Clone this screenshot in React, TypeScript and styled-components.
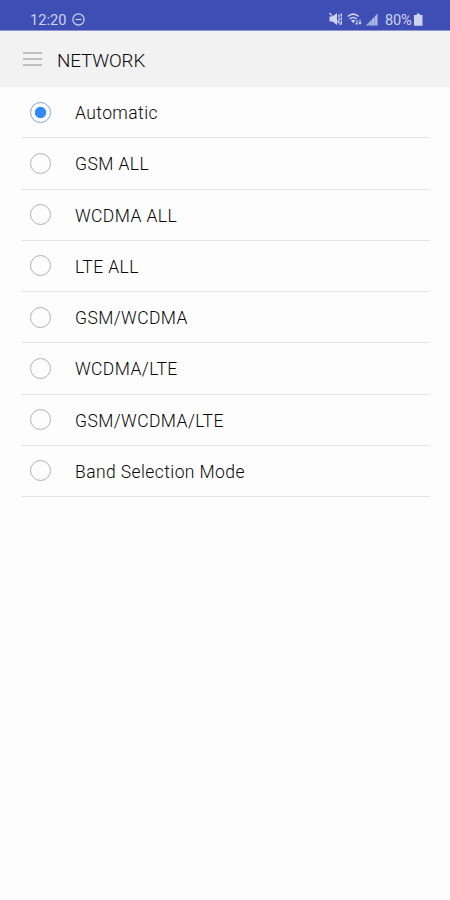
import React, { useState } from 'react';
import styled, { createGlobalStyle } from 'styled-components';

const GlobalStyle = createGlobalStyle`
  * { box-sizing: border-box; }
  body { margin: 0; background: #fdfdfd; font-family: Roboto, 'Liberation Sans', sans-serif; }
`;

const Screen = styled.div`
  display: flex;
  flex-direction: column;
  width: 450px;
  height: 900px;
  overflow: hidden;
  background: #fdfdfd;
`;

const StatusBar = styled.header`
  display: flex;
  align-items: center;
  flex: none;
  height: 31px;
  padding: 8px 27px 0 30px;
  background: #3e4eb5;
  border-bottom: 1px solid #8b95d2;
  color: #cdd3f3;
`;

const Clock = styled.span`
  width: 37px;
  margin-right: 5px;
  padding-top: 2px;
  font-size: 14.6px;
  line-height: 20px;
  white-space: nowrap;
`;

const StatusIcons = styled.div`
  display: flex;
  align-items: center;
  margin-left: auto;
`;

const StatusIcon = styled.svg<{ $gap?: number }>`
  display: block;
  flex: none;
  margin-right: ${({ $gap = 0 }) => $gap}px;
`;

const Battery = styled.span`
  width: 29px;
  padding-top: 1px;
  font-size: 14.6px;
  line-height: 20px;
  letter-spacing: -0.15px;
  white-space: nowrap;
`;

const TitleBar = styled.div`
  display: flex;
  align-items: center;
  flex: none;
  height: 56px;
  padding: 2px 23px 0;
  background: #f2f2f2;
`;

const MenuButton = styled.button`
  display: flex;
  flex-direction: column;
  gap: 4px;
  width: 19px;
  margin: 0 15px 3px 0;
  padding: 0;
  border: 0;
  background: none;
`;

const MenuLine = styled.span`
  height: 2px;
  background: #bfbfbf;
`;

const Title = styled.h1`
  margin: 0;
  padding-top: 1px;
  color: #080808;
  font-size: 18.8px;
  font-weight: 300;
  line-height: 24px;
  letter-spacing: -0.1px;
`;

const Options = styled.div`
  display: flex;
  flex-direction: column;
  padding: 0 20px 0 21px;
`;

const Option = styled.label`
  display: flex;
  align-items: center;
  height: 51.25px;
  padding-left: 9px;
  border-bottom: 1px solid #e4e4e4;
`;

const Radio = styled.input`
  appearance: none;
  flex: none;
  width: 21px;
  height: 21px;
  margin: 0 24px 0 0;
  border: 1px solid #b0b0b0;
  border-radius: 50%;
  &:checked {
    border-color: #7fa6cf;
    background: radial-gradient(circle, #2f8af5 5.3px, transparent 6px);
  }
`;

const Label = styled.span`
  padding-top: 2px;
  color: #080808;
  font-size: 17.5px;
  font-weight: 300;
  line-height: 22px;
  letter-spacing: 0.41px;
  white-space: nowrap;
`;

const modes = [
  'Automatic',
  'GSM ALL',
  'WCDMA ALL',
  'LTE ALL',
  'GSM/WCDMA',
  'WCDMA/LTE',
  'GSM/WCDMA/LTE',
  'Band Selection Mode',
];

export default function App() {
  const [mode, setMode] = useState(modes[0]);
  return (
    <Screen>
      <GlobalStyle />
      <StatusBar>
        <Clock>12:20</Clock>
        <StatusIcon width="13" height="13" viewBox="0 0 13 13" fill="none" stroke="currentColor" strokeWidth="1.2">
          <circle cx="6.5" cy="6.5" r="5.6" />
          <path d="M3.5 6.5h6" />
        </StatusIcon>
        <StatusIcons>
          <StatusIcon $gap={4} width="14" height="14" viewBox="0 0 14 14" fill="currentColor">
            <path d="M.5 4.5h3L8 1v12L3.5 9.5h-3z" />
            <path d="M.5 1l11 11.5M10 2.5v9M12.3 1.5v11.5" fill="none" stroke="currentColor" strokeWidth="1.4" strokeDasharray="3 0.7" />
          </StatusIcon>
          <StatusIcon $gap={4} width="15" height="14" viewBox="0 0 15 14" fill="none" stroke="currentColor" strokeWidth="1.5">
            <path d="M.7 4.5Q6.2-.3 11.8 4.5M2.6 7Q6.2 4 9.8 7" />
            <path d="M4 8.5q2.2-1.4 4.4 0l-2.2 2.7z" fill="currentColor" stroke="none" />
            <path d="M10 8v4.5m-1.3-1.3l1.3 1.3M13 12V7.5m-1.3 3.2L13 12l1.3-1.3" strokeWidth="1.1" />
          </StatusIcon>
          <StatusIcon $gap={7} width="12" height="13" viewBox="0 0 12 13" fill="currentColor">
            <path d="M0 12.5L11.5.5v12z" opacity=".5" />
            <path d="M0 12.5l2.3-2.4v2.4zM3 9.4l2.2-2.3v5.4H3zM6 6.3L8.2 4v8.5H6zM9 3.2L11.5.5v12H9z" opacity=".55" />
          </StatusIcon>
          <Battery>80%</Battery>
          <StatusIcon width="9" height="13" viewBox="0 0 9 13" fill="currentColor">
            <path d="M2.8.5h3V2h2.7v10.7H0V2h2.8z" />
          </StatusIcon>
        </StatusIcons>
      </StatusBar>
      <TitleBar>
        <MenuButton aria-label="Menu">
          <MenuLine />
          <MenuLine />
          <MenuLine />
        </MenuButton>
        <Title>NETWORK</Title>
      </TitleBar>
      <Options role="radiogroup">
        {modes.map((name) => (
          <Option key={name}>
            <Radio type="radio" name="network-mode" checked={mode === name} onChange={() => setMode(name)} />
            <Label>{name}</Label>
          </Option>
        ))}
      </Options>
    </Screen>
  );
}
